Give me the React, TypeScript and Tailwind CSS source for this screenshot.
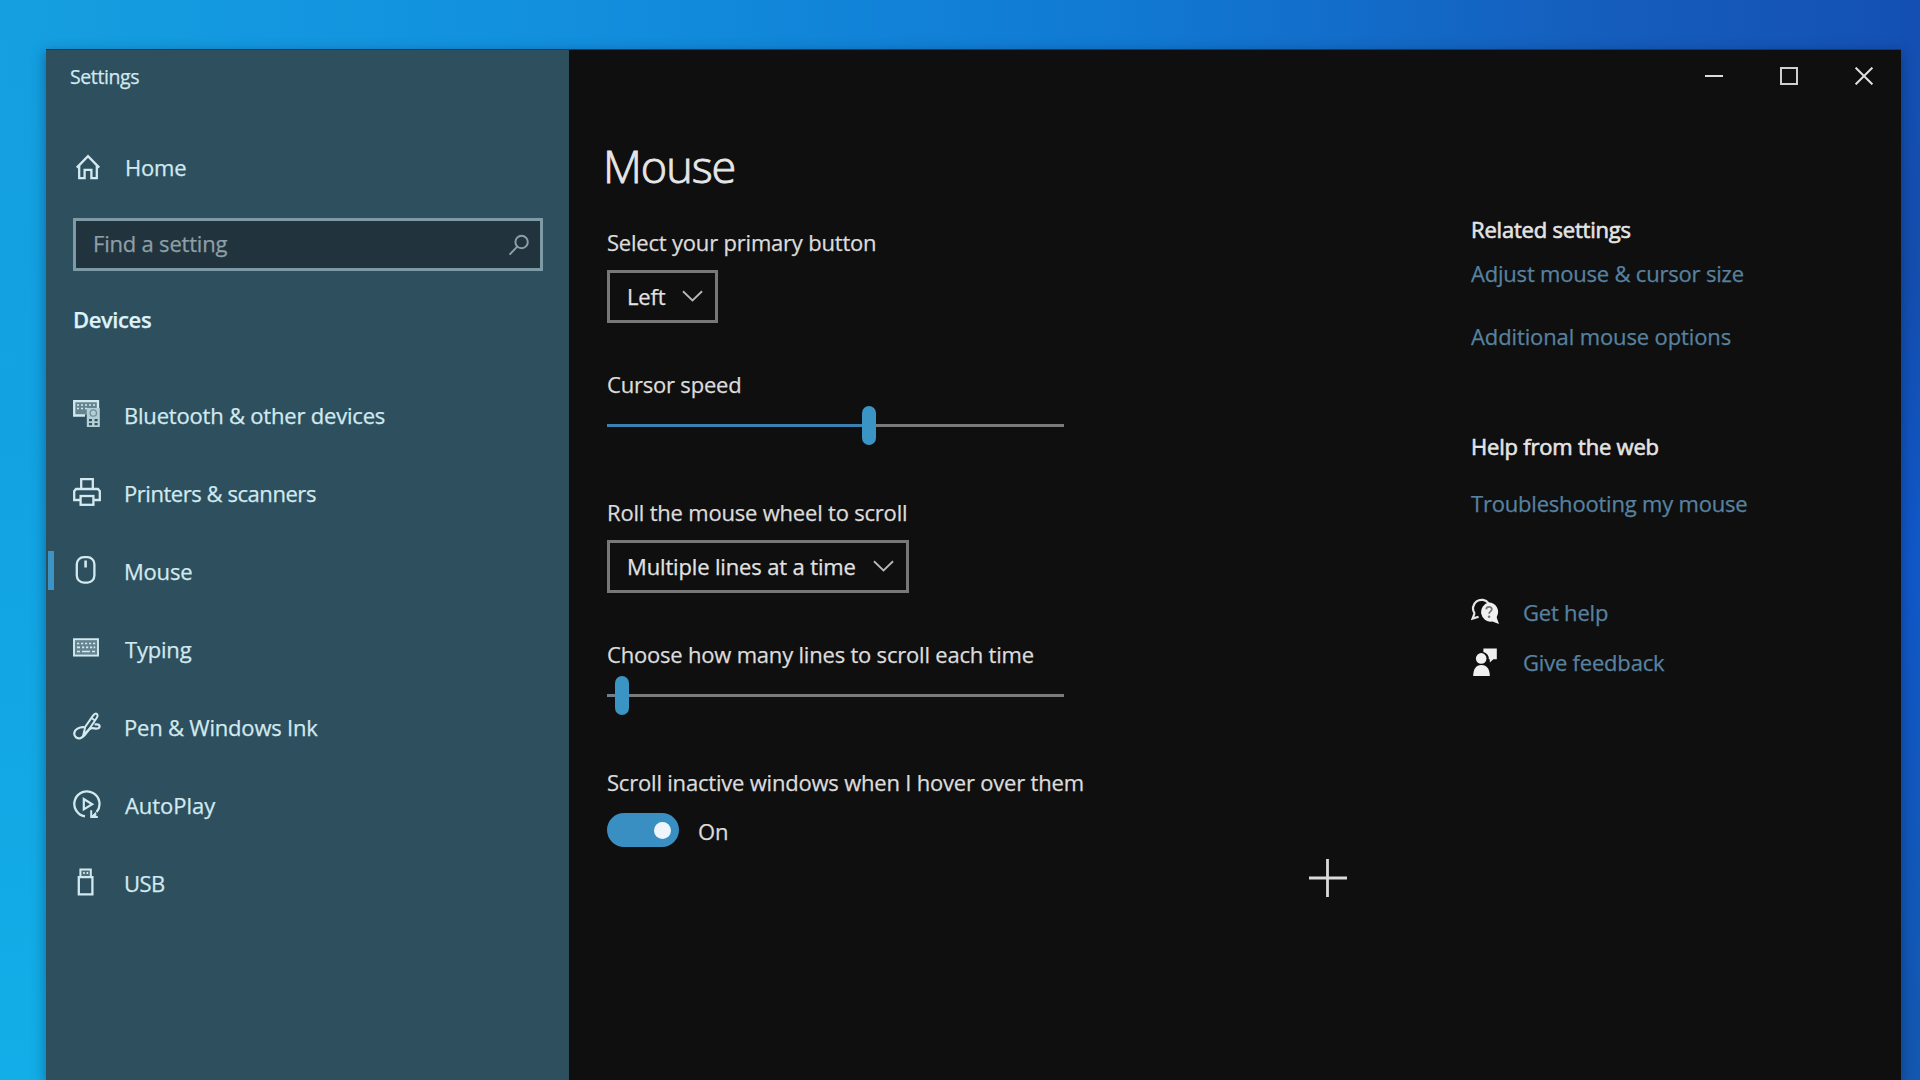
import { useState, type ReactNode } from "react";

interface IconProps {
    children: ReactNode;
    className?: string;
}

function Glyph({ children, className = "" }: IconProps) {
    return (
        <svg
            viewBox="0 0 28 28"
            fill="none"
            stroke="currentColor"
            strokeWidth={2.3}
            className={`w-7 h-7 shrink-0 -mt-0.5 ${className}`}
        >
            {children}
        </svg>
    );
}

const DevicesIcon = () => (
    <Glyph>
        <path d="M12 15.5H1.2V1.2H25V8" fill="currentColor" fillOpacity={0.35} />
        <path d="M4 5h2M8 5h2M12 5h2M16 5h2M20 5h2M4 8.5h2M8 8.5h2M12 8.5h2" strokeWidth={1.6} />
        <rect x="13.8" y="8" width="13" height="19" rx="0.5" fill="#b4ced6" stroke="none" />
        <circle cx="20.3" cy="13" r="3.2" fill="none" stroke="#6f909c" strokeWidth={1.3} />
        <path d="M16 19h3v2.2h-3zM21.6 19h3v2.2h-3zM16 23h3v2.2h-3zM21.6 23h3v2.2h-3z" fill="#2d4f5e" stroke="none" />
    </Glyph>
);

const PrinterIcon = () => (
    <Glyph>
        <path d="M8.2 11V1.2h11.6V11" />
        <path d="M7.5 22H1.2V13.2L3 11h22l1.8 2.2V22h-6.3" />
        <rect x="7.6" y="18" width="12.8" height="8.8" />
    </Glyph>
);

const MouseIcon = () => (
    <Glyph>
        <rect x="3.8" y="1.2" width="17.6" height="25.4" rx="7" />
        <path d="M12.6 4.5v7" strokeWidth={2.6} />
    </Glyph>
);

const KeyboardIcon = () => (
    <Glyph>
        <rect x="1" y="5.2" width="24" height="16.4" fill="currentColor" fillOpacity={0.35} strokeWidth={1.9} />
        <path d="M4 9.5h2.2M8 9.5h2.2M12 9.5h2.2M16 9.5h2.2M20 9.5h2.2M4 13.4h3M9 13.4h2.2M13 13.4h2.2M17 13.4h2.2M20.6 13.4h1.6M4 17.5h3M9 17.5h8M19 17.5h3" strokeWidth={1.7} />
    </Glyph>
);

const PenIcon = () => (
    <Glyph>
        <path d="M10.4 22.5 12.3 14.6 20.2 3.4c1.2-2 3.3-2.4 4.2-.8.6 1 .2 2-.6 3.2L15.6 18z" strokeWidth={2} />
        <path d="M18.2 5.8l3.8 2.7" strokeWidth={1.8} />
        <path d="M11.5 15.2C6.5 14.6 1.3 17.4 1.2 21.6c0 3.6 3.4 5.4 6.3 4.5 3.3-1 5.1-3.9 7.2-7 1-1.5 2.4-3 4.8-2.9 2.2.2 3.2.6 5 .3 2-.3 2.7-2.4 1.4-3.6-1-.9-2.6-.6-4.3-.4" strokeWidth={2.2} />
    </Glyph>
);

const AutoPlayIcon = () => (
    <Glyph>
        <path d="M12 26.4A12.6 12.6 0 1 1 23.6 22" />
        <path d="M18.2 20.2v6.8h6.6" strokeWidth={2} />
        <path d="M18.2 26.8l4.6-4.4v4.4z" fill="currentColor" strokeWidth={1} />
        <path d="M10.8 9v10.4l8.4-5.2z" strokeWidth={2.2} />
    </Glyph>
);

const UsbIcon = () => (
    <Glyph>
        <path d="M7.4 9V1.4h10.4V9" fill="currentColor" fillOpacity={0.2} strokeWidth={2} />
        <path d="M10.2 5h1.6M13.6 5h1.6" strokeWidth={2.2} />
        <path d="M5.8 9.2h13.6v17.2H5.8z" strokeWidth={2.3} />
    </Glyph>
);

const NAV_ITEMS = [
    { label: "Bluetooth & other devices", icon: DevicesIcon, spacing: "" },
    { label: "Printers & scanners", icon: PrinterIcon, spacing: "tracking-[-0.45px]" },
    { label: "Mouse", icon: MouseIcon, spacing: "" },
    { label: "Typing", icon: KeyboardIcon, spacing: "pl-px" },
    { label: "Pen & Windows Ink", icon: PenIcon, spacing: "" },
    { label: "AutoPlay", icon: AutoPlayIcon, spacing: "pl-px tracking-[-0.05px]" },
    { label: "USB", icon: UsbIcon, spacing: "tracking-[-0.5px]" },
];

function Sidebar() {
    const [active, setActive] = useState("Mouse");

    return (
        <aside className="flex flex-col w-[523px] shrink-0 pt-[13px] bg-[#2d4f5e] text-[#d2e9ef]">
            <div className="pl-6 text-[19.5px] leading-[30px] tracking-[-0.4px]">Settings</div>

            <button className="flex items-center h-[30px] mt-[61px] pl-[29px] gap-[24px]">
                <svg viewBox="0 0 26 26" fill="none" stroke="currentColor" strokeWidth={2.3} className="w-[26px] h-[26px] -mt-0.5">
                    <path d="M1.8 13.6 13 2.2l11.2 11.4" />
                    <path d="M4.2 11.6v12.6h5.4v-8.4h6.8v8.4h5.4V11.6" />
                </svg>
                <span className="-mt-px">Home</span>
            </button>

            <div className="flex items-center justify-between h-[53px] mt-[35px] ml-[27px] mr-[26px] pl-[17px] pr-[10px] border-[3px] border-[#7d9ba6] bg-[#21343e] text-[#8e9fa7]">
                <span className="-mt-[3px]">Find a setting</span>
                <svg viewBox="0 0 22 22" fill="none" stroke="currentColor" strokeWidth={2} className="w-[22px] h-[22px]">
                    <circle cx="13.6" cy="8" r="6.2" />
                    <path d="M9.2 12.6 1.6 20.6" />
                </svg>
            </div>

            <div className="mt-[33px] pl-[27px] leading-[30px] font-semibold tracking-[-0.4px] text-[#def2f8]">Devices</div>

            <nav className="flex flex-col mt-[42px]">
                {NAV_ITEMS.map(({ label, icon: Icon, spacing }) => (
                    <button
                        key={label}
                        onClick={() => setActive(label)}
                        className="flex items-center h-[78px] pl-[2px]"
                    >
                        <span className={`w-[6px] h-[39px] -mt-0.5 ${active === label ? "bg-[#3c94c4]" : ""}`} />
                        <span className="flex items-center pl-[19px] gap-[23px]">
                            <Icon />
                            <span className={spacing}>{label}</span>
                        </span>
                    </button>
                ))}
            </nav>
        </aside>
    );
}

function Dropdown({ value }: { value: string }) {
    return (
        <button className="flex items-center self-start h-[53px] mt-[13px] pl-[17px] pr-[12px] gap-[17px] border-[3px] border-[#787878] text-[#e2e2e2]">
            <span className="tracking-[-0.15px]">{value}</span>
            <svg viewBox="0 0 22 12" fill="none" stroke="#b8b8b8" strokeWidth={1.9} className="w-[21px] h-3 -mt-0.5">
                <path d="M1 1l10 9.6L21 1" />
            </svg>
        </button>
    );
}

interface SliderProps {
    label: string;
    fill: number;
    track: string;
}

function Slider({ label, fill, track }: SliderProps) {
    return (
        <>
            <div className="mt-[46px] leading-[30px]">{label}</div>
            <div className="flex items-center w-[457px] h-10 mt-1.5">
                <span className={`h-[3px] ${track}`} style={{ width: `${fill}px` }} />
                <span className="w-[14px] h-[39px] rounded-full bg-[#3a94c4]" />
                <span className="flex-1 h-[3px] bg-[#7a7a7a]" />
            </div>
        </>
    );
}

function MouseSettings() {
    return (
        <section className="flex flex-col w-[902px] shrink-0 pl-[38px] text-[#dcdcdc]">
            <h1 className="h-[60px] mt-[87px] -ml-[4px] text-[45px] leading-[60px] font-light tracking-[-1.05px] text-[#e6e6e6] [-webkit-text-stroke:0.9px]">Mouse</h1>

            <div className="mt-[31px] leading-[30px]">Select your primary button</div>
            <Dropdown value="Left" />

            <Slider label="Cursor speed" fill={255} track="bg-[#3c80b2]" />

            <div className="mt-[52px] leading-[30px]">Roll the mouse wheel to scroll</div>
            <Dropdown value="Multiple lines at a time" />

            <Slider label="Choose how many lines to scroll each time" fill={8} track="bg-[#6f7f8c]" />

            <div className="mt-[52px] leading-[30px]">Scroll inactive windows when I hover over them</div>
            <div className="flex items-center mt-[16px] h-[34px] gap-[19px]">
                <span className="flex items-center justify-end w-[72px] h-[34px] pr-2 rounded-full bg-[#3a8fc2]">
                    <span className="w-[17px] h-[17px] rounded-full bg-[#eef6fc]" />
                </span>
                <span className="pt-0.5">On</span>
            </div>
        </section>
    );
}

function RelatedSettings() {
    return (
        <section className="flex flex-col pt-[165px] leading-[30px] text-[#5782a0]">
            <h2 className="text-[#e4e4e4] [-webkit-text-stroke:0.6px]">Related settings</h2>
            <a className="mt-[14px]">Adjust mouse &amp; cursor size</a>
            <a className="mt-[33px] tracking-[-0.12px]">Additional mouse options</a>

            <h2 className="mt-[80px] text-[#e4e4e4] [-webkit-text-stroke:0.6px]">Help from the web</h2>
            <a className="mt-[27px]">Troubleshooting my mouse</a>

            <a className="flex items-center mt-[79px] gap-[24px]">
                <svg viewBox="0 0 28 28" className="w-7 h-7 -mt-0.5" fill="none">
                    <path d="M3.6 16.4A8.6 8.6 0 1 1 17.6 6.4M3.6 16.2 1.6 21.6l6-1.8" stroke="#e6e6e6" strokeWidth={2.2} />
                    <path d="M18 5.6a9.2 9.2 0 0 1 8.2 13.2c-.5 1-.6 1.7-.2 2.6l2 5.6-6.6-2.5A9.2 9.2 0 1 1 18 5.6z" fill="#f0f0f0" />
                    <path d="M15.2 12.4c.2-3.6 5.8-3.3 5.6 0-.1 2-2.7 2.1-2.7 4.4" stroke="#777" strokeWidth={1.8} />
                    <circle cx="18.1" cy="19.8" r="1.3" fill="#777" />
                </svg>
                <span>Get help</span>
            </a>
            <a className="flex items-center mt-[20px] gap-[24px]">
                <svg viewBox="0 0 28 28" className="w-7 h-7" fill="#f0f0f0">
                    <path d="M12.4 0.6H25.8v10.6h-3.4l-3.6 3.4v-3.4h-1A7 7 0 0 0 12.4 4z" />
                    <circle cx="10.2" cy="10.4" r="5.3" />
                    <path d="M2.2 28c0-6.6 2.6-11 8.2-11s8.4 4.4 8.4 11z" />
                </svg>
                <span>Give feedback</span>
            </a>
        </section>
    );
}

function WindowControls() {
    return (
        <div className="absolute top-0 right-0 flex text-[#e0e0e0]">
            <button className="flex items-center justify-center w-[75px] h-[54px]" title="Minimize">
                <span className="w-[18px] h-[2.5px] bg-[#dcdcdc]" />
            </button>
            <button className="flex items-center justify-center w-[75px] h-[54px]" title="Maximize">
                <span className="w-[18px] h-[18px] border-[2.5px] border-[#cfcfcf]" />
            </button>
            <button className="flex items-center justify-center w-[75px] h-[54px]" title="Close">
                <svg viewBox="0 0 18 18" fill="none" stroke="currentColor" strokeWidth={2} className="w-[18px] h-[18px]">
                    <path d="M0.6 0.6l16.8 16.8M17.4 0.6 0.6 17.4" />
                </svg>
            </button>
        </div>
    );
}

function App() {
    return (
        <div className="relative w-full h-screen overflow-hidden pt-[49px] pl-[46px] pr-[19px] bg-[linear-gradient(90deg,#159fe0_0%,#1290de_28%,#1178d2_60%,#155cbc_85%,#1450b4_100%)] font-['Open_Sans',sans-serif] text-[22px] tracking-[-0.2px] whitespace-nowrap select-none [-webkit-text-stroke:0.25px]">
            {/* desktop showing down both sides of the window */}
            <div className="absolute top-0 left-0 w-[46px] h-full bg-[linear-gradient(180deg,#159fe000_0%,#12a2e2_40%,#12aee8_100%)]" />
            <div className="absolute top-0 right-0 w-[19px] h-full bg-[linear-gradient(180deg,#1450b4_0%,#144eae_25%,#1058ca_52%,#1258c0_70%,#1358b0_100%)]" />

            <main className="relative flex h-full bg-[#0f0f0f] shadow-[0_4px_12px_1px_rgba(0,30,70,0.4)]">
                <Sidebar />
                <MouseSettings />
                <RelatedSettings />
                <WindowControls />
                <div className="absolute inset-x-0 top-0 h-px bg-[#0d3c62]" />
            </main>

            {/* crosshair pointer */}
            <svg viewBox="0 0 40 40" className="absolute left-[1308px] top-[858px] w-10 h-10 pointer-events-none">
                <path d="M19.5 1v38M1 20h38" stroke="#dadada" strokeWidth={2.8} />
            </svg>
        </div>
    );
}

export default App;
